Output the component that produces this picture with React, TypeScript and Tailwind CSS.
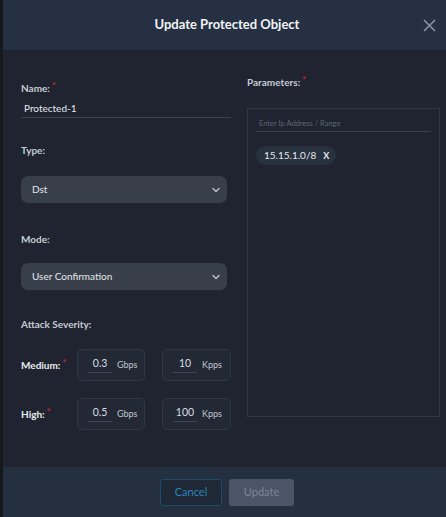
import React from 'react';

const font = { fontFamily: 'Lato, "Open Sans", sans-serif' };

function Req() {
  return <span className="text-[#c2283c] text-[9px] align-top ml-[2px] leading-none">*</span>;
}

function Chevron() {
  return (
    <svg width="8" height="6" viewBox="0 0 8 6" className="text-[#b3b9c2]">
      <path d="M1 1.5 L4 4.5 L7 1.5" fill="none" stroke="currentColor" strokeWidth="1.6" strokeLinecap="round" strokeLinejoin="round" />
    </svg>
  );
}

function Select({ value, className }: { value: string; className?: string }) {
  return (
    <div className={`flex items-center justify-between h-[27px] rounded-[7px] bg-[#393f4a] pl-[11px] pr-[7px] ${className ?? ''}`}>
      <span className="text-[10px] text-[#e4e7eb]">{value}</span>
      <Chevron />
    </div>
  );
}

function RateBox({ value, unit, width }: { value: string; unit: string; width: string }) {
  return (
    <div className={`flex items-center h-[32px] ${width} rounded-[5px] border border-[#303846] bg-[#222935] pl-[10px]`}>
      <span className="w-[24px] text-center text-[10.5px] text-[#d8dce2] border-b border-[#3d4654] pb-[2px] leading-[13px]">{value}</span>
      <span className="ml-[5px] text-[9px] text-[#c3c8cf]">{unit}</span>
    </div>
  );
}

export default function App() {
  return (
    <div style={font} className="w-[446px] h-[517px] flex flex-col border-l-[3px] border-[#15181d] bg-[#1f2430]">
      {/* header */}
      <div className="relative h-[50px] shrink-0 bg-[#253142] flex items-center justify-center pl-[5px]">
        <span className="text-[13px] font-bold text-[#f1f3f6]">Update Protected Object</span>
        <svg className="absolute right-[10px] top-[19px]" width="13" height="13" viewBox="0 0 13 13">
          <path d="M1 1 L12 12 M12 1 L1 12" stroke="#8b95a4" strokeWidth="1.5" />
        </svg>
      </div>

      {/* body */}
      <div className="flex-1 flex pl-[18px] pr-[6px] gap-[16px]">
        <div className="w-[210px] pt-[31px]">
          <div className="text-[10px] font-bold text-[#c6cbd2] leading-[14px]">Name:<Req /></div>
          <div className="mt-[5px] h-[18px] border-b border-[#3a424f] pl-[3px] text-[10px] text-[#e6e9ed] leading-[17px]">Protected-1</div>

          <div className="mt-[25px] text-[10px] font-bold text-[#c6cbd2] leading-[14px]">Type:</div>
          <Select value="Dst" className="mt-[19px] w-[206px]" />

          <div className="mt-[29px] text-[10px] font-bold text-[#c6cbd2] leading-[14px]">Mode:</div>
          <Select value="User Confirmation" className="mt-[17px] w-[206px]" />

          <div className="mt-[27px] text-[10px] font-bold text-[#c6cbd2] leading-[14px]">Attack Severity:</div>

          <div className="mt-[18px] flex items-center">
            <div className="w-[56px] text-[10px] font-bold text-[#e8ebef]">Medium:<Req /></div>
            <RateBox value="0.3" unit="Gbps" width="w-[68px]" />
            <div className="ml-[17px]"><RateBox value="10" unit="Kpps" width="w-[69px]" /></div>
          </div>
          <div className="mt-[17px] flex items-center">
            <div className="w-[56px] text-[10px] font-bold text-[#e8ebef]">High:<Req /></div>
            <RateBox value="0.5" unit="Gbps" width="w-[68px]" />
            <div className="ml-[17px]"><RateBox value="100" unit="Kpps" width="w-[69px]" /></div>
          </div>
        </div>

        <div className="flex-1 pt-[25px]">
          <div className="text-[10px] font-bold text-[#c6cbd2] leading-[14px]">Parameters:<Req /></div>
          <div className="mt-[19px] h-[309px] border border-[#303845] px-[8px] pt-[10px]">
            <div className="border-b border-[#38404c] pb-[2px] pl-[3px] text-[7.5px] text-[#5e6673] leading-[10px]">Enter Ip Address / Range</div>
            <div className="mt-[14px] inline-flex items-center h-[19px] rounded-full bg-[#28313e] pl-[8px] pr-[7px] text-[10px] text-[#e6e9ed]">
              15.15.1.0/8
              <span className="ml-[7px] font-bold text-[9px]">X</span>
            </div>
          </div>
        </div>
      </div>

      {/* footer */}
      <div className="h-[50px] shrink-0 bg-[#243040] flex items-center justify-center gap-[7px] pl-[5px]">
        <button className="w-[62px] h-[27px] rounded-[3px] border border-[#1b4d6e] bg-[#1f2835] text-[11px] text-[#2a86bd]">Cancel</button>
        <button className="w-[65px] h-[27px] rounded-[3px] bg-[#4a5567] text-[11px] text-[#7d8898]">Update</button>
      </div>
    </div>
  );
}
